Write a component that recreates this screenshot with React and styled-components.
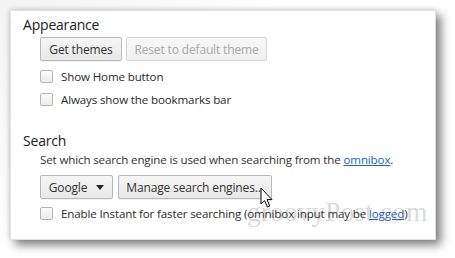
import React from "react";
import styled, { createGlobalStyle } from "styled-components";

const Global = createGlobalStyle`
  html, body { margin: 0; padding: 0; background: #ffffff; }
  body { width: 455px; height: 258px; overflow: hidden; font-family: "Open Sans", "Noto Sans", sans-serif; }
`;

const Stage = styled.div`
  width: 455px;
  height: 258px;
  padding: 10px 0 0 10px;
  box-sizing: border-box;
  background: linear-gradient(135deg, #f4f4f4 0%, #ffffff 40%, #ffffff 100%);
`;

const Panel = styled.div`
  position: relative;
  width: 426px;
  height: 230px;
  box-sizing: border-box;
  background: #ffffff;
  border: 1px solid #e2e2e2;
  box-shadow: 5px 5px 9px rgba(0, 0, 0, 0.5), -1px -1px 4px rgba(0, 0, 0, 0.12);
  padding: 4px 0 0 12px;
  color: #222;
  font-size: 11.6px;
  letter-spacing: -0.15px;
`;

const Heading = styled.div`
  font-size: 14px;
  line-height: 20px;
  letter-spacing: -0.2px;
  color: #222;
  margin-top: ${(p) => p.$top || 0}px;
`;

const Body = styled.div`
  padding-left: 17px;
  display: flex;
  flex-direction: column;
`;

const Row = styled.div`
  display: flex;
  align-items: center;
  gap: ${(p) => p.$gap || 4}px;
  margin-top: ${(p) => p.$top || 0}px;
  height: ${(p) => p.$h || 23}px;
`;

const Button = styled.div`
  height: 24px;
  box-sizing: border-box;
  display: flex;
  align-items: center;
  justify-content: center;
  gap: 9px;
  padding: 0 ${(p) => p.$pad || 10}px;
  width: ${(p) => (p.$w ? p.$w + "px" : "auto")};
  border: 1px solid ${(p) => (p.$disabled ? "#d4d4d4" : "#b9b9b9")};
  border-radius: 2px;
  background: ${(p) =>
    p.$disabled
      ? "linear-gradient(#f8f8f8, #f0f0f0)"
      : "linear-gradient(#f6f6f6, #e8e8e8)"};
  box-shadow: ${(p) => (p.$disabled ? "none" : "0 1px 0 rgba(0,0,0,0.06)")};
  color: ${(p) => (p.$disabled ? "#a8a8a8" : "#333")};
  font-size: 12px;
  white-space: nowrap;
`;

const Check = styled.span`
  width: 13px;
  height: 13px;
  box-sizing: border-box;
  border: 1px solid #b4b4b4;
  border-radius: 2px;
  background: linear-gradient(#fbfbfb, #ececec);
  flex: none;
`;

const Label = styled.span`
  color: #2b2b2b;
  white-space: nowrap;
`;

const Text = styled.div`
  color: #333;
  white-space: nowrap;
  line-height: 18px;
  margin-top: ${(p) => p.$top || 0}px;
`;

const Link = styled.span`
  color: #1f5fb6;
  text-decoration: underline;
`;

const Caret = styled.span`
  width: 0;
  height: 0;
  border-left: 4.5px solid transparent;
  border-right: 4.5px solid transparent;
  border-top: 5px solid #222;
`;

const Watermark = styled.div`
  position: absolute;
  left: 236px;
  top: 186px;
  font-family: "Liberation Serif", "DejaVu Serif", serif;
  font-size: 27px;
  letter-spacing: 0.3px;
  color: rgba(120, 120, 120, 0.3);
  pointer-events: none;
  white-space: nowrap;
`;

const Cursor = styled.svg`
  position: absolute;
  left: 249px;
  top: 176px;
`;

export default function App() {
  return (
    <>
      <Global />
      <Stage>
        <Panel>
          <Heading>Appearance</Heading>
          <Body>
            <Row $top={2} $h={24}>
              <Button $w={82}>Get themes</Button>
              <Button $disabled $w={141}>Reset to default theme</Button>
            </Row>
            <Row $top={4} $gap={8}>
              <Check />
              <Label>Show Home button</Label>
            </Row>
            <Row $top={0} $gap={8}>
              <Check />
              <Label>Always show the bookmarks bar</Label>
            </Row>
          </Body>
          <Heading $top={20}>Search</Heading>
          <Body>
            <Text $top={0}>
              Set which search engine is used when searching from the <Link>omnibox</Link>.
            </Text>
            <Row $top={6} $h={24} $gap={5}>
              <Button $w={73} $pad={8}>
                Google <Caret />
              </Button>
              <Button $w={154}>Manage search engines...</Button>
            </Row>
            <Row $top={3} $gap={8}>
              <Check />
              <Label>
                Enable Instant for faster searching (omnibox input may be <Link>logged</Link>)
              </Label>
            </Row>
          </Body>
          <Watermark>groovyPost.com</Watermark>
          <Cursor width="14" height="22" viewBox="0 0 14 22">
            <path
              d="M1 1 L1 17 L4.6 13.6 L7.4 20 L9.8 19 L7 12.6 L12 12.6 Z"
              fill="#ffffff"
              stroke="#000000"
              strokeWidth="1"
              strokeLinejoin="miter"
            />
          </Cursor>
        </Panel>
      </Stage>
    </>
  );
}
